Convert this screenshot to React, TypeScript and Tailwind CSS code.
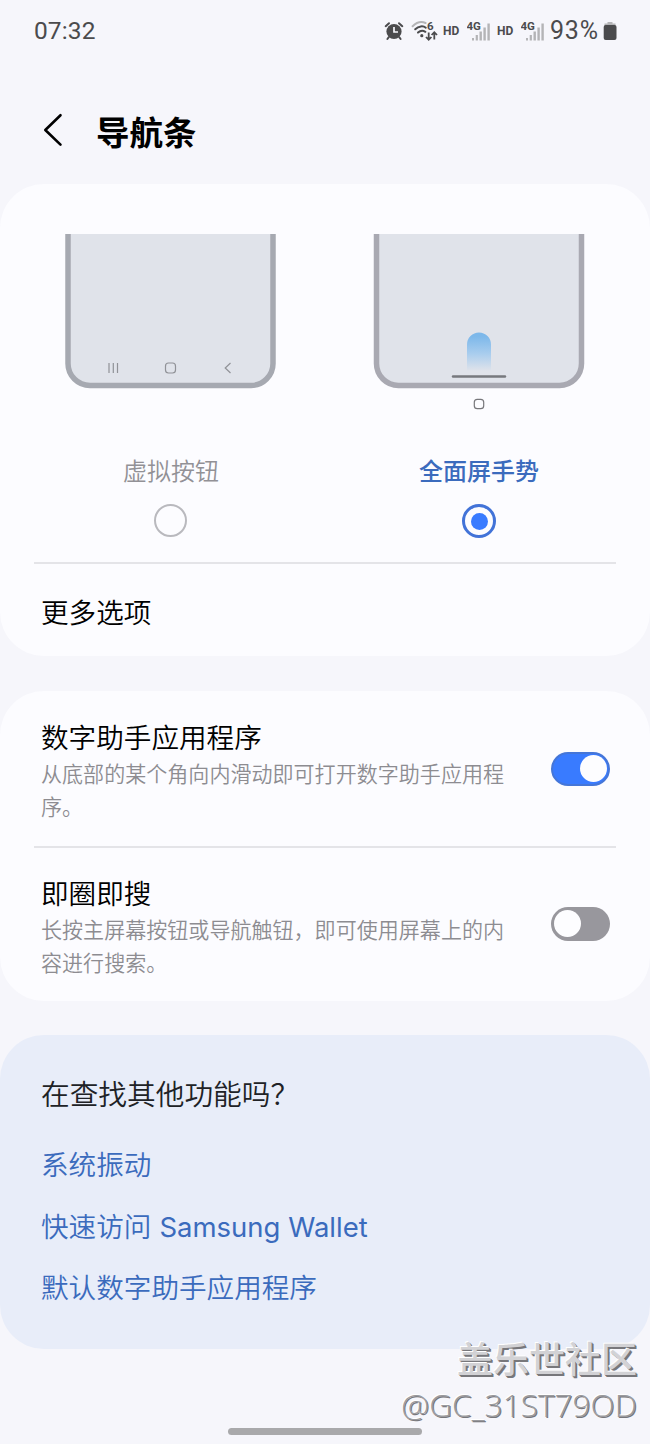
import React from "react";

interface SettingRowProps {
  title: string;
  lines: string[];
  enabled: boolean;
}

const Toggle: React.FC<{ enabled: boolean }> = ({ enabled }) => (
  <div
    className={
      enabled
        ? "mb-[4px] flex h-[34px] w-[59px] shrink-0 items-center justify-end rounded-full border-2 border-[#4576d8] bg-[#397bff] px-[1.5px]"
        : "mb-[6px] flex h-[34px] w-[59px] shrink-0 items-center justify-start rounded-full bg-[#98979d] px-[3px]"
    }
  >
    <div className="size-[27px] rounded-full bg-[#fdfdff]" />
  </div>
);

const SettingRow: React.FC<SettingRowProps> = ({ title, lines, enabled }) => (
  <div className="flex items-center justify-between pr-[40px] pl-[41px]">
    <div>
      <h2 className="text-[27.6px] leading-[36px] font-[350] text-black">{title}</h2>
      <p className="mt-[3px] text-[21.05px] leading-[33px] whitespace-nowrap text-[#8d8c91]">
        {lines.map((line) => (
          <span key={line} className="block">
            {line}
          </span>
        ))}
      </p>
    </div>
    <Toggle enabled={enabled} />
  </div>
);

const Signal = () => (
  <svg width="26" height="22" viewBox="0 0 26 22">
    <text x="-0.5" y="9.5" fontSize="11.5" fontWeight="700" fill="#4b4b4d" fontFamily="Roboto, sans-serif">
      4G
    </text>
    <g fill="#b4b4b6">
      <rect x="5" y="18" width="2" height="2.5" />
      <rect x="8.7" y="15" width="2.2" height="5.5" />
      <rect x="12.5" y="11.5" width="2.4" height="9" />
      <rect x="16.4" y="7.5" width="2.4" height="13" />
      <rect x="20.4" y="3.5" width="2.4" height="17" />
    </g>
  </svg>
);

const StatusBar = () => (
  <div className="flex h-[62px] items-center pr-[33px] pl-[34px] font-[Roboto,sans-serif] font-normal text-[#4b4b4d]">
    <span className="text-[24.5px] tracking-[0.1px]">07:32</span>
    <div className="ml-auto flex items-center">
      <svg width="20" height="20" viewBox="0 0 20 20">
        <path d="M1.7 5.2 5 2.2M18.3 5.2 15 2.2M4.8 16.2 3.4 18M15.2 16.2l1.4 1.8" stroke="#4b4b4d" strokeWidth="2" strokeLinecap="round" />
        <circle cx="10" cy="10.5" r="7.6" fill="#4b4b4d" />
        <path d="M10 6v5h4" fill="none" stroke="#f7f7fc" strokeWidth="1.7" />
      </svg>
      <svg className="ml-[7px]" width="28" height="24" viewBox="0 0 28 24">
        <g fill="none" strokeLinecap="round" strokeWidth="2">
          <path d="M1.6 7.2C6 3 11 2.4 14.5 4" stroke="#b4b4b6" />
          <path d="M4.2 10.3c3.6-3.4 8-3.7 10.6-1.6M7 13.6c2.2-2 5-2.2 7.4-.8" stroke="#4b4b4d" />
        </g>
        <circle cx="10.8" cy="16.7" r="1.6" fill="#4b4b4d" />
        <text x="16" y="10.8" fontSize="11.5" fontWeight="700" fill="#4b4b4d" fontFamily="Roboto, sans-serif">
          6
        </text>
        <path d="M17.7 13.5v7M15 18l2.7 2.8 2.7-2.8M23.3 20.5v-7M20.6 16l2.7-2.8L26 16" fill="none" stroke="#4b4b4d" strokeWidth="1.8" />
      </svg>
      <span className="ml-[4px] w-[17px] text-[12px] font-bold">HD</span>
      <span className="ml-[7px]">
        <Signal />
      </span>
      <span className="ml-[4px] w-[17px] text-[12px] font-bold">HD</span>
      <span className="ml-[7px]">
        <Signal />
      </span>
      <span className="ml-[3px] w-[53px] text-[25px] tracking-[0.8px]">93%</span>
      <svg width="14" height="20" viewBox="0 0 14 20">
        <path d="M4.5 1h5v1.6h3V5h-11V2.6h3z" fill="#b4b4b6" />
        <rect x="0.7" y="4" width="12.8" height="15" rx="2" fill="#4b4b4d" />
      </svg>
    </div>
  </div>
);

const ButtonsPreview = () => (
  <svg width="212" height="180" viewBox="0 0 212 180">
    <path d="M3 0v129.5a22 22 0 0 0 22 22h161a22 22 0 0 0 22-22V0" fill="#e0e3ea" stroke="#a6a9b1" strokeWidth="5.5" />
    <g fill="none" stroke="#909297" strokeWidth="1.2">
      <path d="M44 129v10M48.3 129v10M52.5 129v10" />
      <rect x="100.5" y="129" width="10" height="10" rx="3" />
      <path d="m165.5 129-5.3 5 5.3 5" />
    </g>
  </svg>
);

const GesturePreview = () => (
  <svg width="212" height="180" viewBox="0 0 212 180">
    <defs>
      <linearGradient id="swipe" x1="0" y1="0" x2="0" y2="1">
        <stop offset="0.1" stopColor="#7db8ea" />
        <stop offset="0.55" stopColor="#a9cdee" />
        <stop offset="1" stopColor="#e0e3ea" />
      </linearGradient>
    </defs>
    <path d="M3.5 0v129.5a22 22 0 0 0 22 22h161a22 22 0 0 0 22-22V0" fill="#e0e3ea" stroke="#a9a9b2" strokeWidth="5.5" />
    <path d="M94 137v-26.5a12 12 0 0 1 24 0V137z" fill="url(#swipe)" />
    <path d="M80 142.5h52" stroke="#77797e" strokeWidth="2.4" strokeLinecap="round" />
    <rect x="101.3" y="165.3" width="9.4" height="9.4" rx="3" fill="none" stroke="#77777b" strokeWidth="1.2" />
  </svg>
);

const links = ["系统振动", "快速访问", "默认数字助手应用程序"];

export default function App() {
  return (
    <div className="relative h-[1444px] w-[650px] overflow-hidden bg-[#f6f6fb] font-['Noto_Sans_CJK_SC',sans-serif] font-[350]">
      <StatusBar />

      <header className="flex h-[122px] items-start pt-[44px] pl-[43px]">
        <svg className="mt-[5px]" width="20" height="38" viewBox="0 0 20 38">
          <path d="M17.5 4.2 2.3 19l15.2 14.6" fill="none" stroke="#000" strokeWidth="2.6" strokeLinecap="round" strokeLinejoin="round" />
        </svg>
        <h1 className="ml-[33px] text-[33.5px] leading-[50px] font-bold text-black">导航条</h1>
      </header>

      <section className="h-[472px] rounded-[44px] bg-[#fcfcff] pt-[50px]">
        <div className="grid grid-cols-2">
          <div className="flex flex-col items-center pl-[17px]">
            <ButtonsPreview />
            <span className="mt-[38px] text-[24px] leading-[36px] text-[#929196]">虚拟按钮</span>
            <span className="mt-[16px] mr-px size-[33px] rounded-full border-[2.5px] border-[#b9b9be]" />
          </div>
          <div className="flex flex-col items-center pr-[17px]">
            <GesturePreview />
            <span className="mt-[38px] text-[24px] leading-[36px] font-medium text-[#3b6bbd]">全面屏手势</span>
            <span className="mt-[16px] flex size-[34px] items-center justify-center rounded-full border-[3.5px] border-[#4273d8]">
              <span className="size-[17px] rounded-full bg-[#397bff]" />
            </span>
          </div>
        </div>
        <div className="mx-[34px] mt-[24px] h-[2px] bg-[#e4e4e8]" />
        <p className="mt-[29px] pl-[41px] text-[27.6px] leading-[36px] text-black">更多选项</p>
      </section>

      <section className="mt-[35px] h-[310px] rounded-[44px] bg-[#fcfcff] pt-[27px]">
        <SettingRow
          title="数字助手应用程序"
          lines={["从底部的某个角向内滑动即可打开数字助手应用程", "序。"]}
          enabled
        />
        <div className="mx-[34px] mt-[23px] mb-[26px] h-[2px] bg-[#e4e4e8]" />
        <SettingRow
          title="即圈即搜"
          lines={["长按主屏幕按钮或导航触钮，即可使用屏幕上的内", "容进行搜索。"]}
          enabled={false}
        />
      </section>

      <section className="mt-[34px] h-[314px] rounded-[44px] bg-[#e8edf9] pt-[39px] pl-[41px]">
        <h2 className="text-[28.7px] leading-[38px] font-[350] text-[#202226]">在查找其他功能吗？</h2>
        <ul className="mt-[21px] text-[27.6px] leading-[61.5px] text-[#3b6bbd]">
          {links.map((link) => (
            <li key={link} className="h-[61.5px]">
              {link}
              {link === "快速访问" && (
                <span className="ml-[8px] font-[Inter,sans-serif] text-[27.5px] font-normal">Samsung Wallet</span>
              )}
            </li>
          ))}
        </ul>
      </section>

      {/* Gesture handle */}
      <div className="absolute bottom-[9px] left-[228px] h-[7px] w-[194px] rounded-full bg-[#a9a9ab]" />

      {/* Community watermark */}
      <div className="absolute right-[13px] bottom-[16px] flex flex-col items-end whitespace-nowrap">
        <span className="mb-px text-[36px] leading-[48px] font-medium text-[#d2d2d5] [text-shadow:-1px_-1px_0_#fff,1px_1px_0_#77777b,2px_2px_0_#77777b]">
          盖乐世社区
        </span>
        <span className="font-['Open_Sans',sans-serif] text-[31.6px] leading-[46px] font-light text-[#9a9a9e] [text-shadow:-1px_-1px_0_#fff,1px_1px_0_#77777b]">
          @GC_31ST79OD
        </span>
      </div>
    </div>
  );
}
